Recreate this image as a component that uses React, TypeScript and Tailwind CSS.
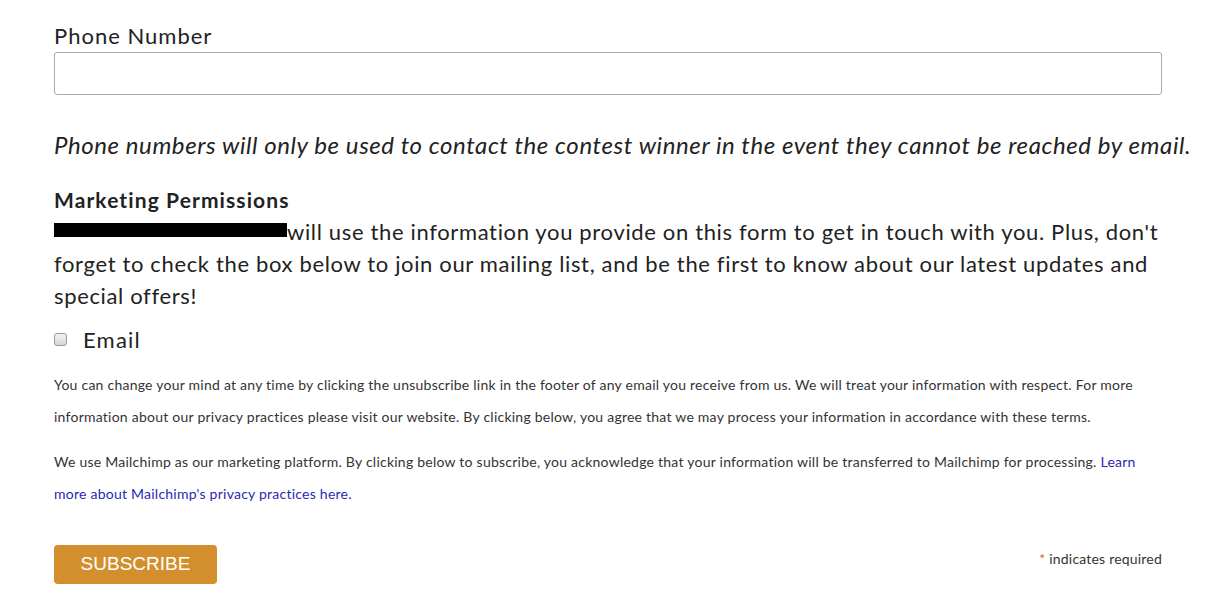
import React from 'react';

export default function App() {
  return (
    <div className="min-h-screen bg-white font-['Lato','Noto_Sans',sans-serif] text-[#222]">
      <div className="w-[1136px] pl-[54px] pt-[22px] box-content">
        <label className="block text-[22px] leading-[28px] tracking-[1px]">Phone Number</label>
        <input
          type="text"
          className="block w-[1108px] h-[43px] mt-[2px] border border-[#a9a9a9] rounded-[3px] outline-none"
        />

        <p className="mt-[34px] text-[24px] italic leading-[32px] tracking-[0.58px] whitespace-nowrap">
          Phone numbers will only be used to contact the contest winner in the event they cannot be reached by email.
        </p>

        <h3 className="mt-[25px] text-[21px] font-bold leading-[28px] tracking-[1.1px]">Marketing Permissions</h3>
        <p className="text-[22px] leading-[32px] mt-[2px] tracking-[0.65px] w-[1130px]">
          <span className="inline-block align-top w-[233px] h-[32px] relative">
            <span className="absolute left-0 top-[7px] w-[233px] h-[14px] bg-black" />
          </span>
          will use the information you provide on this form to get in touch with you. Plus, don't forget to check the box below to join our mailing list, and be the first to know about our latest updates and special offers!
        </p>

        <label className="flex items-center mt-[11px] h-[32px]">
          <input
            type="checkbox"
            className="appearance-none w-[13px] h-[13px] m-0 rounded-[3px] border border-[#9a9a9a] bg-gradient-to-b from-[#f4f4f4] to-[#d6d6d6]"
          />
          <span className="ml-[16px] text-[22px] tracking-[1.2px]">Email</span>
        </label>

        <p className="mt-[14px] w-[1108px] text-[14px] leading-[32px] text-[#333] tracking-[0.24px]">
          You can change your mind at any time by clicking the unsubscribe link in the footer of any email you receive from us. We will treat your information with respect. For more information about our privacy practices please visit our website. By clicking below, you agree that we may process your information in accordance with these terms.
        </p>

        <p className="mt-[13px] w-[1108px] text-[14px] leading-[32px] text-[#333] tracking-[0.24px]">
          We use Mailchimp as our marketing platform. By clicking below to subscribe, you acknowledge that your information will be transferred to Mailchimp for processing.{' '}
          <a href="#" className="text-[#2929b3]">Learn more about Mailchimp's privacy practices here.</a>
        </p>

        <div className="flex w-[1108px] items-center justify-between mt-[35px]">
          <button className="w-[163px] h-[39px] rounded-[4px] bg-[#d38f2d] text-white text-[19px] font-['Liberation_Sans',Arial,sans-serif]">
            SUBSCRIBE
          </button>
          <div className="text-[14px] text-[#333] -mt-[12px] tracking-[0.2px]">
            <span className="text-[#e85c41]">*</span> indicates required
          </div>
        </div>
      </div>
    </div>
  );
}
